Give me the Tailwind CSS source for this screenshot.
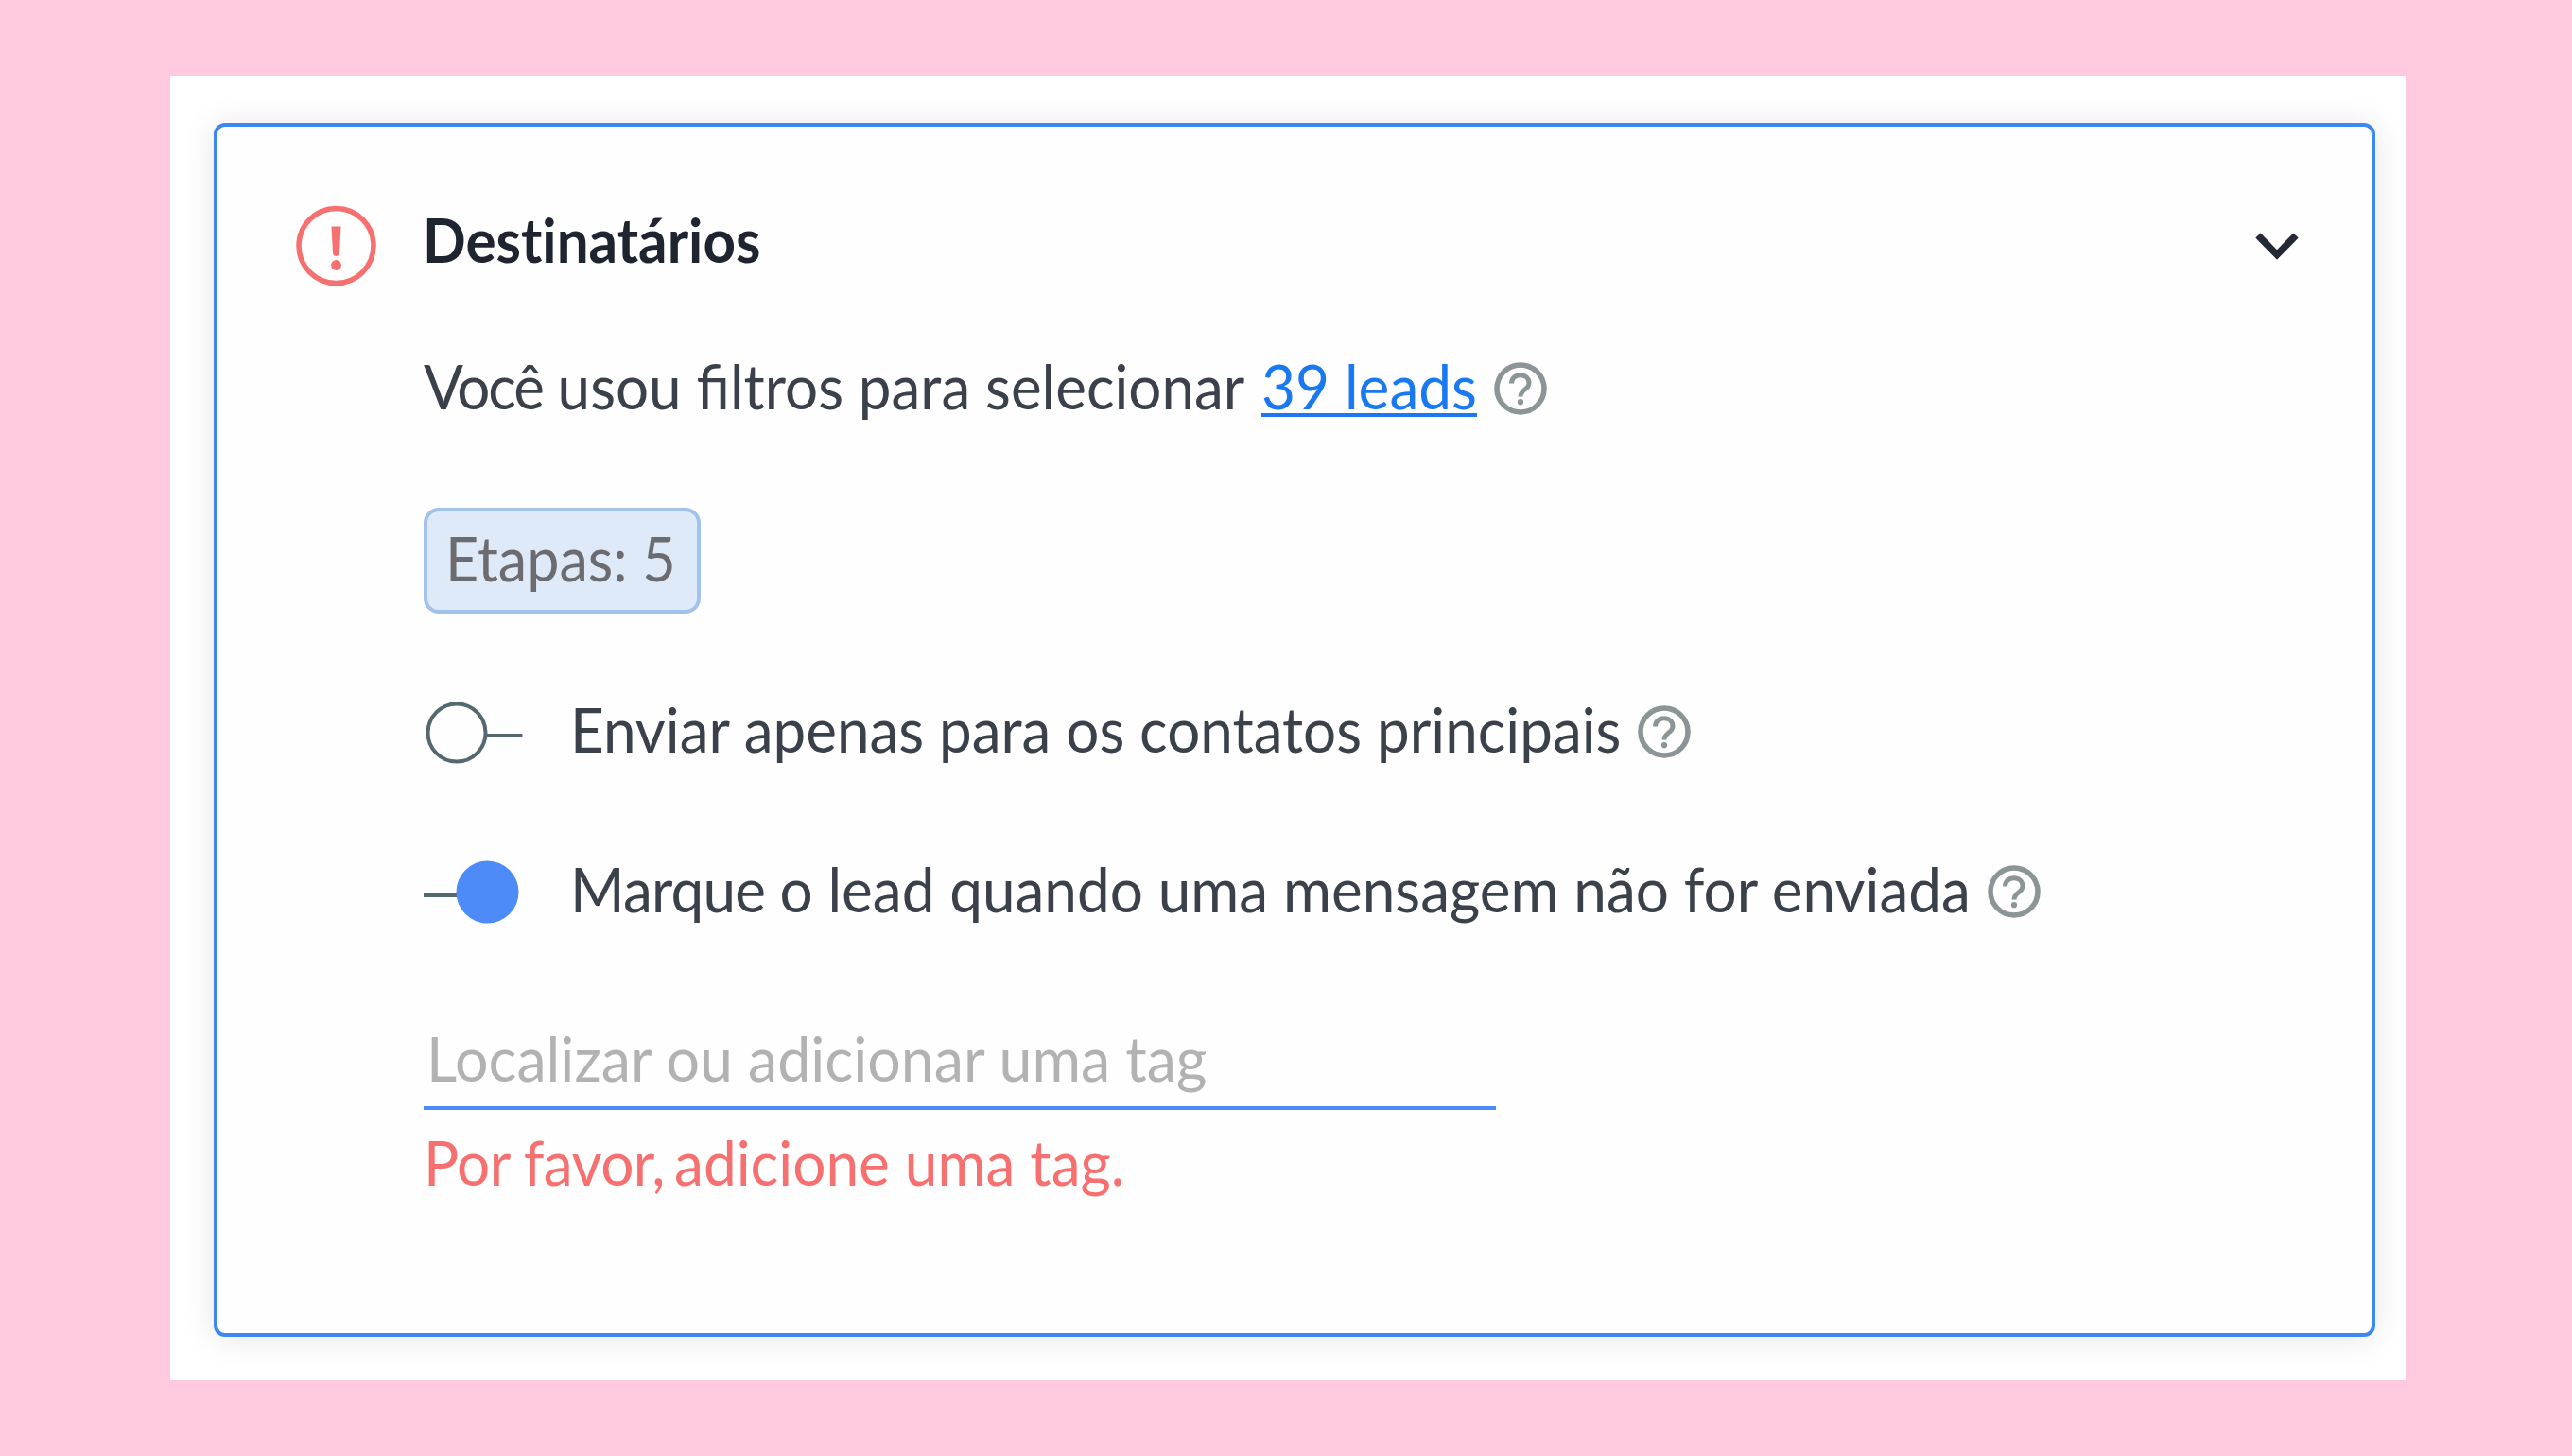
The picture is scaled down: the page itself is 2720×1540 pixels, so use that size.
<!DOCTYPE html>
<html lang="pt-BR">
<head>
<meta charset="utf-8">
<title>Destinatários</title>
<script src="https://cdn.jsdelivr.net/npm/@tailwindcss/browser@4"></script>
</head>
<body class="bg-[#ffcae0] w-[2720px] h-[1540px] overflow-hidden font-['Lato','Noto_Sans',sans-serif] text-[65px] leading-[80px] text-[#3a414b]">
<svg class="hidden">
  <symbol id="help" viewBox="0 0 56 56">
    <circle cx="28" cy="28" r="25" fill="none" stroke="#8b9496" stroke-width="5.500"/>
    <path d="M18.500 22.500c0-5.500 4-8.800 9.300-8.800s9.200 3.500 9.200 8.500c0 6.500-9 7-9 14.300" fill="none" stroke="#8b9496" stroke-width="5"/>
    <circle cx="28" cy="42.200" r="3.100" fill="#8b9496"/>
  </symbol>
</svg>
<main class="ml-[180px] pt-20">
  <div class="w-[2364px] h-[1380px] bg-white overflow-hidden pl-[46px] pt-[50px]">
    <section class="w-[2286px] h-[1284px] rounded-xl border-4 border-[#3b88f2] bg-[#fefefe] shadow-[0_2px_36px_rgba(20,20,50,0.10)] pt-[79px]">
      <header class="flex h-[155px] items-start">
        <svg class="ml-[83px] mt-1 size-[86px] shrink-0" viewBox="0 0 86 86">
          <circle cx="42.500" cy="43" r="39.500" fill="none" stroke="#f77070" stroke-width="5.500"/>
          <path d="M37.500 22.500H47.500L46 51c-.5 4-6.500 4-7 0z" fill="#f77070"/>
          <circle cx="42.500" cy="63.500" r="5.400" fill="#f77070"/>
        </svg>
        <h2 class="ml-[48px] w-[1937px] font-bold text-[#1e2530] whitespace-nowrap origin-left scale-x-[0.926] [font-variant-ligatures:none]">Destinatários</h2>
        <svg class="mt-[30px] w-[48px] h-[36px] shrink-0" viewBox="0 0 48 36"><path d="M4 6L24 26.500L44 6" fill="none" stroke="#232a35" stroke-width="7.500"/></svg>
      </header>
      <div class="ml-[218px]">
        <div class="flex h-[169px]">
          <span class="w-[886px] shrink-0 whitespace-nowrap origin-left scale-x-[0.953]"><span class="tracking-[-2.2px]">Você</span> usou filtros para selecionar</span>
          <a class="w-[228px] h-[73px] shrink-0 border-b-4 border-[#1a78f0] text-[#1a78f0]"><span class="block w-full whitespace-nowrap origin-left scale-x-[0.9556]">39 leads</span></a>
          <svg class="ml-[18px] mt-[15px] size-[56px] shrink-0"><use href="#help"/></svg>
        </div>
        <div class="w-[293px] h-[112px] rounded-2xl border-4 border-[#a1c3eb] bg-[#dfeaf8] pl-[19px] pt-[9px] text-[#6b6b70]"><span class="block whitespace-nowrap origin-left scale-x-[0.94]">Etapas: 5</span></div>
        <div class="mt-[82px] flex h-[169px]">
          <svg class="mt-[10px] w-[155px] h-[68px] shrink-0" viewBox="0 0 155 68"><circle cx="35" cy="34" r="30.500" fill="none" stroke="#546870" stroke-width="4"/><path d="M67 37H104.500" stroke="#546870" stroke-width="4"/></svg>
          <span class="w-[1129px] shrink-0 whitespace-nowrap origin-left scale-x-[0.9535]">Enviar apenas para os contatos principais</span>
          <svg class="mt-[15px] size-[56px] shrink-0"><use href="#help"/></svg>
        </div>
        <div class="flex h-[179px]">
          <svg class="mt-[10px] w-[155px] h-[68px] shrink-0" viewBox="0 0 155 68"><path d="M0 37H38" stroke="#546870" stroke-width="4"/><circle cx="67.500" cy="33.500" r="33" fill="#4c8bf8"/></svg>
          <span class="w-[1499px] shrink-0 whitespace-nowrap origin-left scale-x-[0.954]"><span class="tracking-[-0.8px]">Marque </span>o lead quando uma mensagem não for enviada</span>
          <svg class="mt-[15px] size-[56px] shrink-0"><use href="#help"/></svg>
        </div>
        <div class="h-[95px] w-[1134px] border-b-4 border-[#4c8bf8] pl-[3px] text-[#b2b2b2]"><span class="block whitespace-nowrap origin-left scale-x-[0.9645]">Localizar ou adicionar uma tag</span></div>
        <p class="mt-[15px] whitespace-nowrap text-[#f77070] origin-left scale-x-[0.956]"><span class="tracking-[-0.6px]">Por favor,</span><span class="tracking-[-6px]"> </span>adicione uma tag.</p>
      </div>
    </section>
  </div>
</main>
</body>
</html>
